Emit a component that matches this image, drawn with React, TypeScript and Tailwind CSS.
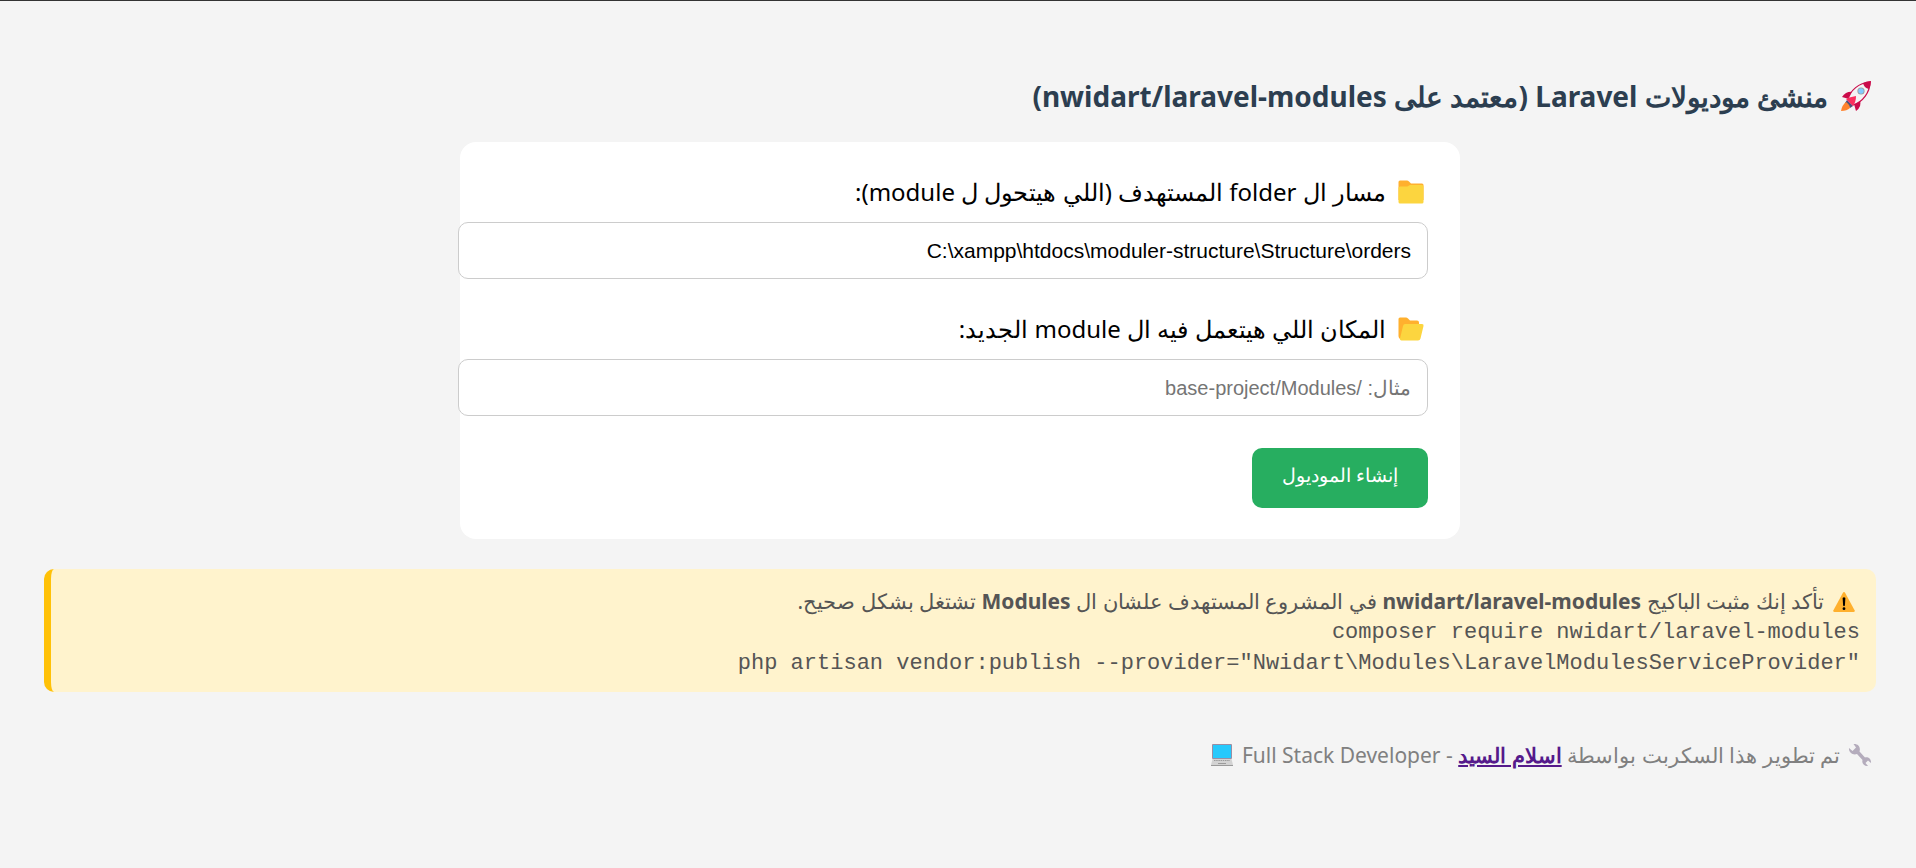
import React from "react";

function Rocket() {
  return (
    <svg viewBox="0 0 32 32" className="h-8 w-8 shrink-0" aria-hidden="true">
      <path d="M9 19 2 17Q6 11 13 12Z" fill="#ca0b4a" />
      <path d="M14 24 16 31Q22 27 20 20Z" fill="#ca0b4a" />
      <path d="M8 20C10 10 19 3 30 2C30 12 23 22 13 25Z" fill="#f4f4f4" stroke="#ca0b4a" strokeWidth="1.2" />
      <path d="M23 3Q27 1 31 1Q31 5 29 9Q24 8 23 3Z" fill="#ca0b4a" />
      <circle cx="21" cy="11" r="3.6" fill="#9b9b9b" />
      <circle cx="21" cy="11" r="2.7" fill="#83cbff" />
      <path d="M7 20 13 26 10 28 5 23Z" fill="#50507a" />
      <path d="M6 19Q10 17 16 16Q16 22 13 26Z" fill="#fb2f5e" />
      <path d="M6 22Q10 25 10 28Q7 31 1 31Q2 25 6 22Z" fill="#ff822d" />
    </svg>
  );
}

function Folder({ open = false }: { open?: boolean }) {
  return (
    <svg viewBox="0 0 26 24" className="h-6 w-[26px] shrink-0" aria-hidden="true">
      {open ? (
        <>
          <path d="M0.5 2Q0.5 0.5 2 0.5H8Q9 0.5 10 1.5L12 3.5H19Q21 3.5 21 5.5V12L4 22.5Q0.5 22 0.5 19Z" fill="#ffb02e" />
          <path d="M7 7H24Q26 7 25.5 9L22.5 21.5Q22 23.5 20 23.5H3.5Q1.5 23.5 2 21.5L5 9Q5.5 7 7 7Z" fill="#fcd53f" />
        </>
      ) : (
        <>
          <path d="M0.5 2Q0.5 0.5 2 0.5H9Q10 0.5 11 1.5L13 3.5H24Q25.5 3.5 25.5 5V20H0.5Z" fill="#ffb02e" />
          <path d="M0.5 8Q0.5 6.5 2 6.5H9Q10 6.5 11 5.5L12 5H24Q25.5 5 25.5 6.5V22Q25.5 23.5 24 23.5H2Q0.5 23.5 0.5 22Z" fill="#fcd53f" />
        </>
      )}
    </svg>
  );
}

function Warning() {
  return (
    <svg viewBox="0 0 24 24" className="h-6 w-6 shrink-0" aria-hidden="true">
      <path d="M10.8 3Q12 1 13.2 3L22.7 20.5Q23 22 21.5 22H2.5Q1 22 1.3 20.5Z" fill="#ffb02e" />
      <path d="M10.6 8Q12 6.5 13.4 8L12.9 15.5Q12 17 11.1 15.5Z" fill="#000" />
      <circle cx="12" cy="18.7" r="1.4" fill="#000" />
    </svg>
  );
}

function Wrench() {
  return (
    <svg viewBox="0 0 24 24" className="h-6 w-6 shrink-0" aria-hidden="true">
      <path d="M5.5 1C10 0.5 13 4 11.5 8.5L17 14.5C20 13.5 23.5 16 23 20L20 17.5L17.5 20L20 23C16 23.5 13.5 20 14.5 17L9 11C5 12.5 0.5 9.5 1 5L4.5 8L8 4.5Z" fill="#b4acbc" />
    </svg>
  );
}

function Laptop() {
  return (
    <svg viewBox="0 0 24 24" className="h-6 w-6 shrink-0" aria-hidden="true">
      <rect x="2" y="1" width="20" height="15" rx="1" fill="#998ea4" />
      <rect x="3" y="2" width="18" height="13" fill="#26c9fc" />
      <path d="M2.5 16H21.5L23 22H1Z" fill="#d3d3d3" />
      <path d="M4 17.5H20" stroke="#9b9b9b" strokeWidth="1" strokeDasharray="1.5 0.7" />
      <path d="M8 20.5H16" stroke="#9b9b9b" strokeWidth="1" />
      <path d="M1 22H23V23H1Z" fill="#9b9b9b" />
    </svg>
  );
}

const fieldClass =
  "box-content block h-[23px] w-full rounded-[10px] border border-[#ccc] bg-white px-4 py-4 font-['Liberation_Sans',sans-serif] text-[21px] text-black placeholder:text-xl placeholder:text-[#757575]";

export default function App() {
  return (
    <div dir="rtl" className="min-h-screen border-t border-[#333] bg-[#f4f4f4] ps-10 pe-11 pt-[75px] pb-10 font-['Noto_Sans',sans-serif]">
      <h1 className="flex items-center gap-3 ps-1 text-[28px] leading-10 font-bold text-[#2c3e50]">
        <Rocket />
        <span>منشئ موديولات Laravel (معتمد على nwidart/laravel-modules)</span>
      </h1>

      <form className="mx-auto mt-[26px] w-full max-w-[1000px] rounded-2xl bg-white px-8 pt-8 pb-[31px]" onSubmit={(e) => e.preventDefault()}>
        <label htmlFor="source" className="mb-3 flex items-center gap-3 ps-1 text-2xl leading-9">
          <Folder />
          <span>مسار ال folder المستهدف (اللي هيتحول ل module):</span>
        </label>
        <input id="source" type="text" className={fieldClass} defaultValue="C:\xampp\htdocs\moduler-structure\Structure\orders" />

        <label htmlFor="target" className="mt-8 mb-3 flex items-center gap-3 ps-1 text-2xl leading-9">
          <Folder open />
          <span>المكان اللي هيتعمل فيه ال module الجديد:</span>
        </label>
        <input id="target" type="text" className={fieldClass} placeholder="مثال: /base-project/Modules" />

        <button type="submit" className="mt-8 block h-[60px] rounded-[10px] bg-[#27ae60] px-[30px] pb-1 font-['Liberation_Sans',sans-serif] text-[19px] text-white">
          إنشاء الموديول
        </button>
      </form>

      <section className="mt-[30px] rounded-[10px] border-l-[7px] border-[#ffc107] bg-[#fff3cd] px-4 pt-[17px] pb-[13px] text-[21px] leading-[31px] text-[#555]">
        <p className="flex items-center gap-2 ps-1">
          <Warning />
          <span>
            تأكد إنك مثبت الباكيج <strong>nwidart/laravel-modules</strong> في المشروع المستهدف علشان ال <strong>Modules</strong> تشتغل بشكل صحيح.
          </span>
        </p>
        <code dir="ltr" className="block text-right font-['Liberation_Mono',monospace] text-[22px]">
          composer require nwidart/laravel-modules
        </code>
        <code dir="ltr" className="block text-right font-['Liberation_Mono',monospace] text-[22px]">
          php artisan vendor:publish --provider="Nwidart\Modules\LaravelModulesServiceProvider"
        </code>
      </section>

      <footer className="mt-12 flex items-center gap-2 ps-1 text-[21px] leading-[30px] text-[#808080]">
        <Wrench />
        <span>
          تم تطوير هذا السكربت بواسطة{" "}
          <a href="#" className="font-bold text-[#551a8b] underline">اسلام السيد</a>
          {" "}- Full Stack Developer
        </span>
        <Laptop />
      </footer>
    </div>
  );
}
